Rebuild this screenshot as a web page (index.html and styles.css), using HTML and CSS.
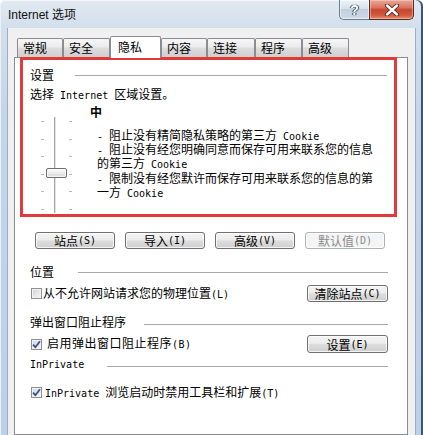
FILE: index.html
```html
<!DOCTYPE html>
<html lang="zh">
<head>
<meta charset="utf-8">
<title>Internet 选项</title>
<link rel="stylesheet" href="styles.css">
</head>
<body>
<div class="window">
  <div class="titlebar">
    <span class="title">Internet 选项</span>
    <div class="caption-btns">
      <div class="cbtn help"><span>?</span></div>
      <div class="cbtn close">
        <svg width="16" height="12" viewBox="0 0 16 12">
          <path d="M3 1.5 L13 10.5 M13 1.5 L3 10.5" stroke="#5a2418" stroke-width="4.2" stroke-linecap="round" fill="none"/>
          <path d="M3 1.5 L13 10.5 M13 1.5 L3 10.5" stroke="#ffffff" stroke-width="2.4" stroke-linecap="round" fill="none"/>
        </svg>
      </div>
    </div>
  </div>
  <div class="client">
    <div class="tabs">
      <div class="tab w46">常规</div>
      <div class="tab w47">安全</div>
      <div class="tab selected">隐私</div>
      <div class="tab w46">内容</div>
      <div class="tab w48">连接</div>
      <div class="tab w47">程序</div>
      <div class="tab w47">高级</div>
    </div>
    <div class="panel">
      <div class="settings">
        <div class="group-head">
          <span>设置</span><span class="rule gap21"></span>
        </div>
        <div class="zone-line">选择<span class="m"> Internet </span>区域设置。</div>
        <div class="slider-row">
          <div class="slider">
            <div class="ticks left">
              <i></i><i></i><i></i><i></i><i></i><i></i>
            </div>
            <div class="track"></div>
            <div class="ticks right">
              <i></i><i></i><i></i><i></i><i></i><i></i>
            </div>
            <div class="thumb"></div>
          </div>
          <div class="level">
            <div class="level-name">中</div>
            <div class="desc">
              <p><span class="m">- </span>阻止没有精简隐私策略的第三方<span class="m"> Cookie</span></p>
              <p><span class="m">- </span>阻止没有经您明确同意而保存可用来联系您的信息的第三方<span class="m"> Cookie</span></p>
              <p class="p3"><span class="m">- </span>限制没有经您默许而保存可用来联系您的信息的第一方<span class="m"> Cookie</span></p>
            </div>
          </div>
        </div>
      </div>

      <div class="btn-row">
        <div class="btn">站点<span class="m">(S)</span></div>
        <div class="btn">导入<span class="m">(I)</span></div>
        <div class="btn">高级<span class="m">(V)</span></div>
        <div class="btn disabled">默认值<span class="m">(D)</span></div>
      </div>

      <div class="group-head gh-loc">
        <span>位置</span><span class="rule gap24"></span>
      </div>
      <div class="opt-row r1">
        <label class="check"><span class="box"></span><span class="lbl">从不允许网站请求您的物理位置<span class="m">(L)</span></span></label>
        <div class="btn wide">清除站点<span class="m">(C)</span></div>
      </div>

      <div class="group-head gh-pop">
        <span>弹出窗口阻止程序</span><span class="rule gap18 low"></span>
      </div>
      <div class="opt-row r2">
        <label class="check"><span class="box checked">
          <svg width="9" height="9" viewBox="0 0 9 9"><path d="M1 4.6 L3.4 7.2 L8 1.2" stroke="#3b4f86" stroke-width="1.8" fill="none"/></svg>
        </span><span class="lbl l2">启用弹出窗口阻止程序<span class="m">(B)</span></span></label>
        <div class="btn wide tall">设置<span class="m">(E)</span></div>
      </div>

      <div class="group-head gh-inp">
        <span class="m">InPrivate</span><span class="rule gap23 low1"></span>
      </div>
      <div class="opt-row r3">
        <label class="check"><span class="box checked">
          <svg width="9" height="9" viewBox="0 0 9 9"><path d="M1 4.6 L3.4 7.2 L8 1.2" stroke="#3b4f86" stroke-width="1.8" fill="none"/></svg>
        </span><span class="lbl l3"><span class="m">InPrivate </span>浏览启动时禁用工具栏和扩展<span class="m">(T)</span></span></label>
      </div>
    </div>
  </div>
</div>
</body>
</html>
```
FILE: styles.css
```css
* { box-sizing: border-box; margin: 0; padding: 0; }
html, body { width: 423px; height: 435px; overflow: hidden; }
body {
  font-family: "Noto Sans CJK SC", "Noto Sans", sans-serif;
  font-size: 12px;
  color: #000;
  background: #ffffff;
}
.m { font-family: "DejaVu Sans Mono", "Liberation Mono", "Noto Sans CJK SC", monospace; font-size: 10px; }

.window {
  width: 423px;
  height: 435px;
  display: flex;
  flex-direction: column;
  border-radius: 6px 6px 0 0;
  background: linear-gradient(to bottom, #e2e9f2 0, #d3dfec 28px, #c4d5e9 120px, #bcd0e7 100%);
  box-shadow: inset 1px 0 0 #eaf1f8, inset -2px 0 0 #3c5670, inset 0 1px 0 #f4f8fb;
}

.titlebar { height: 28px; flex-shrink: 0; display: flex; align-items: flex-start; }
.title {
  font-family: "Liberation Sans", "Noto Sans CJK SC", sans-serif;
  font-size: 12px;
  line-height: 14px;
  margin: 8px 0 0 8px;
  color: #111;
}
.caption-btns { margin-left: auto; margin-right: 9px; display: flex; }
.cbtn { height: 20px; display: flex; align-items: center; justify-content: center; border: 1px solid #6d7b8e; border-top: none; }
.help {
  width: 30px;
  border-radius: 0 0 0 5px;
  border-right: none;
  background: linear-gradient(to bottom, #eef3f8 0, #d7e1ec 45%, #c1cfdf 50%, #cfdbe8 100%);
  box-shadow: inset 0 0 0 1px rgba(255,255,255,.55);
}
.help span {
  font-family: "Liberation Sans", sans-serif;
  font-weight: bold;
  font-size: 14px;
  color: #fff;
  text-shadow: 0 0 1px #2a3a4e, 0 0 1px #2a3a4e, 1px 0 0 #4a5a6e, -1px 0 0 #4a5a6e;
}
.close {
  width: 45px;
  border-color: #5b2a22;
  border-radius: 0 0 5px 0;
  background: linear-gradient(to bottom, #e9a99a 0, #d9735e 40%, #c7452f 52%, #d25a3e 80%, #e48f6e 100%);
  box-shadow: inset 0 0 0 1px rgba(255,220,210,.45);
}

.client {
  flex: 1;
  margin: 0 8px 0 8px;
  background: #f0f0f0;
  padding: 8px 7px 0 6px;
  display: flex;
  flex-direction: column;
  box-shadow: -1px 0 0 #9aaec6, 1px 0 0 #9aaec6;
}

.tabs { height: 21px; display: flex; align-items: flex-end; padding-left: 3px; flex-shrink: 0; }
.tab {
  height: 19px;
  border: 1px solid #898c95;
  border-bottom: none;
  border-radius: 2px 2px 0 0;
  background: linear-gradient(to bottom, #f7f7f7 0, #ebebeb 45%, #dddddd 50%, #cfcfcf 100%);
  line-height: 17px;
  padding-left: 5px;
  font-size: 12px;
}
.w46 { width: 46px; }
.w47 { width: 47px; }
.w48 { width: 48px; }
.tab.selected {
  width: 51px;
  height: 22px;
  margin-bottom: -1px;
  background: #ffffff;
  position: relative;
  z-index: 1;
  line-height: 19px;
  padding-left: 7px;
}

.panel {
  flex: 1;
  background: #ffffff;
  border: 1px solid #898c95;
  padding: 0 19px 0 15px;
  display: flex;
  flex-direction: column;
}

.settings {
  margin: -1px -9px 0 -10px;
  height: 160px;
  flex-shrink: 0;
  border: 3px solid #e23a3a;
  padding: 8px 7px 0 7px;
}

.group-head { display: flex; align-items: center; height: 14px; line-height: 14px; }
.rule { flex: 1; height: 1px; background: #a8a8a8; }
.gap18 { margin-left: 18px; }
.gap21 { margin-left: 21px; }
.gap23 { margin-left: 23px; }
.gap24 { margin-left: 24px; }
.rule.low { margin-top: 4px; }
.rule.low1 { margin-top: 2px; }

.zone-line { margin-top: 6px; line-height: 12px; height: 12px; }

.slider-row { display: flex; margin-top: 6px; }
.slider {
  position: relative;
  width: 37px;
  height: 100px;
  margin: 9px 0 0 8px;
  display: flex;
}
.ticks {
  width: 3px;
  height: 89px;
  margin-top: 6px;
  display: flex;
  flex-direction: column;
  justify-content: space-between;
}
.ticks i { display: block; height: 1px; background: #b9b9b9; }
.ticks.left { margin-left: 3px; }
.ticks.right { margin-left: 12px; }
.track {
  width: 3px;
  margin: 2px 0 2px 10px;
  border-left: 1px solid #a6a6a6;
  border-right: 1px solid #ffffff;
  background: #e3e3e3;
}
.thumb {
  position: absolute;
  left: 8px;
  top: 53px;
  width: 21px;
  height: 10px;
  border: 1px solid #707070;
  border-radius: 2px;
  background: linear-gradient(to bottom, #fbfbfb 0, #ececec 50%, #d7d7d7 100%);
  box-shadow: inset 0 0 0 1px rgba(255,255,255,.7);
}

.level { margin-left: 15px; }
.level-name { font-weight: bold; line-height: 12px; height: 12px; }
.desc { margin-top: 11px; padding-left: 7px; width: 287px; }
.desc p { line-height: 12px; }
.desc p.p3 { margin-top: 1px; }

.btn-row { display: flex; gap: 10px; margin-top: 15px; padding-left: 5px; flex-shrink: 0; }
.btn {
  width: 80px;
  height: 17px;
  border: 1px solid #707070;
  border-radius: 3px;
  background: linear-gradient(to bottom, #f4f4f4 0, #ebebeb 48%, #dddddd 52%, #cfcfcf 100%);
  box-shadow: inset 0 0 0 1px rgba(255,255,255,.75);
  display: flex;
  align-items: center;
  justify-content: center;
  line-height: 15px;
  font-size: 12px;
  white-space: nowrap;
}
.btn.disabled {
  border-color: #adb2b5;
  background: #f4f4f4;
  color: #8b8b8b;
}
.btn.wide { width: 81px; }
.btn.tall { height: 18px; }

.gh-loc { margin-top: 16px; }
.gh-pop { margin-top: 13px; }
.gh-inp { margin-top: 5px; }

.opt-row { display: flex; align-items: center; justify-content: space-between; flex-shrink: 0; }
.r1 { margin-top: 6px; height: 17px; }
.r2 { margin-top: 6px; height: 18px; }
.r3 { margin-top: 12px; height: 17px; }

.check { display: flex; align-items: center; margin-left: 1px; }
.box {
  width: 11px;
  height: 11px;
  border: 1px solid #8e8f8f;
  background: linear-gradient(135deg, #cdd1d7 0, #e6e8eb 55%, #f7f7f7 100%);
  box-shadow: inset 0 0 0 1px #f4f4f4;
  display: flex;
  align-items: center;
  justify-content: center;
}
.box.checked { background: linear-gradient(135deg, #c9d4e4 0, #e2e8f1 55%, #f5f7fa 100%); }
.lbl { margin-left: 1px; line-height: 14px; }
.lbl.l2 { margin-left: 5px; letter-spacing: 0.5px; }
.lbl.l3 { margin-left: 3px; }
```
